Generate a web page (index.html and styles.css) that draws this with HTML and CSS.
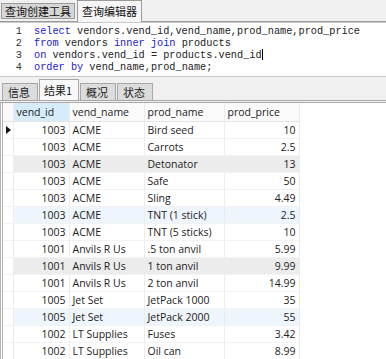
FILE: index.html
```html
<!DOCTYPE html>
<html lang="zh">
<head>
    <meta charset="UTF-8">
    <title>查询编辑器</title>
    <link rel="stylesheet" href="styles.css">
</head>
<body>
    <div class="window">
        <div class="top-tabs">
            <div class="tab">查询创建工具</div>
            <div class="tab active">查询编辑器</div>
        </div>

        <div class="editor">
            <div class="code-line"><span class="ln">1</span><span class="kw">select</span> vendors.vend_id,vend_name,prod_name,prod_price</div>
            <div class="code-line"><span class="ln">2</span><span class="kw">from</span> vendors <span class="kw">inner join</span> products</div>
            <div class="code-line"><span class="ln">3</span><span class="kw">on</span> vendors.vend_id = products.vend_id<span class="caret"></span></div>
            <div class="code-line"><span class="ln">4</span><span class="kw">order by</span> vend_name,prod_name;</div>
        </div>

        <div class="result-tabs">
            <div class="rtab">信息</div>
            <div class="rtab active">结果1</div>
            <div class="rtab">概况</div>
            <div class="rtab">状态</div>
        </div>

        <div class="grid-wrap">
            <table class="grid">
                <thead>
                    <tr>
                        <th class="ind"></th>
                        <th class="c-id sel">vend_id</th>
                        <th class="c-name">vend_name</th>
                        <th class="c-prod">prod_name</th>
                        <th class="c-price">prod_price</th>
                    </tr>
                </thead>
                <tbody>
                    <tr><td class="ind"><span class="arrow"></span></td><td class="num">1003</td><td>ACME</td><td>Bird seed</td><td class="num">10</td></tr>
                    <tr><td class="ind"></td><td class="num">1003</td><td>ACME</td><td>Carrots</td><td class="num">2.5</td></tr>
                    <tr class="gray"><td class="ind"></td><td class="num">1003</td><td>ACME</td><td>Detonator</td><td class="num">13</td></tr>
                    <tr><td class="ind"></td><td class="num">1003</td><td>ACME</td><td>Safe</td><td class="num">50</td></tr>
                    <tr><td class="ind"></td><td class="num">1003</td><td>ACME</td><td>Sling</td><td class="num">4.49</td></tr>
                    <tr class="blue"><td class="ind"></td><td class="num">1003</td><td>ACME</td><td>TNT (1 stick)</td><td class="num">2.5</td></tr>
                    <tr><td class="ind"></td><td class="num">1003</td><td>ACME</td><td>TNT (5 sticks)</td><td class="num">10</td></tr>
                    <tr><td class="ind"></td><td class="num">1001</td><td>Anvils R Us</td><td>.5 ton anvil</td><td class="num">5.99</td></tr>
                    <tr class="gray"><td class="ind"></td><td class="num">1001</td><td>Anvils R Us</td><td>1 ton anvil</td><td class="num">9.99</td></tr>
                    <tr><td class="ind"></td><td class="num">1001</td><td>Anvils R Us</td><td>2 ton anvil</td><td class="num">14.99</td></tr>
                    <tr><td class="ind"></td><td class="num">1005</td><td>Jet Set</td><td>JetPack 1000</td><td class="num">35</td></tr>
                    <tr class="blue"><td class="ind"></td><td class="num">1005</td><td>Jet Set</td><td>JetPack 2000</td><td class="num">55</td></tr>
                    <tr><td class="ind"></td><td class="num">1002</td><td>LT Supplies</td><td>Fuses</td><td class="num">3.42</td></tr>
                    <tr><td class="ind"></td><td class="num">1002</td><td>LT Supplies</td><td>Oil can</td><td class="num">8.99</td></tr>
                </tbody>
            </table>
        </div>
    </div>
</body>
</html>
```

FILE: styles.css
```css
body {
    margin: 0;
    padding: 0;
    background: #ffffff;
    font-family: "Open Sans", "Noto Sans CJK SC", sans-serif;
    color: #1a1a1a;
}

.window {
    width: 386px;
    height: 359px;
    overflow: hidden;
    background: #f0f0f0;
}

/* Top tabs */
.top-tabs {
    display: flex;
    align-items: flex-end;
    height: 22px;
    padding-left: 1px;
    gap: 2px;
    border-bottom: 1px solid #9c9c9c;
    box-sizing: border-box;
}

.tab {
    font-family: "Noto Sans CJK SC", sans-serif;
    font-size: 11px;
    height: 16px;
    line-height: 15px;
    margin-bottom: 2px;
    padding: 0 3px;
    background: #d6d6d6;
    border: 1px solid #9a9a9a;
    box-sizing: border-box;
    color: #111;
}

.tab.active {
    height: 22px;
    line-height: 20px;
    margin-bottom: -1px;
    padding: 0 4px;
    background: #f5f5f5;
    border-bottom: none;
}

/* SQL editor */
.editor {
    height: 55px;
    background: #ffffff;
    border-top: 1px solid #c8c8c8;
    border-bottom: 1px solid #c8c8c8;
    padding-top: 2px;
    box-sizing: border-box;
    font-family: "Liberation Mono", monospace;
    font-size: 10.25px;
    color: #222;
}

.code-line {
    height: 12px;
    line-height: 12px;
    white-space: pre;
}

.ln {
    display: inline-block;
    width: 22px;
    padding-right: 12px;
    text-align: right;
    color: #333;
}

.kw {
    color: #2020d0;
}

.caret {
    display: inline-block;
    width: 1px;
    height: 11px;
    vertical-align: -2px;
    background: #000;
}

/* Result tabs */
.result-tabs {
    display: flex;
    align-items: flex-end;
    height: 23px;
    padding-left: 2px;
    gap: 1px;
    border-bottom: 3px double #a8a8a8;
}

.rtab {
    font-family: "Noto Sans CJK SC", sans-serif;
    font-size: 11px;
    width: 36px;
    height: 17px;
    line-height: 16px;
    padding-left: 5px;
    background: #dcdcdc;
    border: 1px solid #a8a8a8;
    border-bottom: none;
    box-sizing: border-box;
    color: #222;
}

.rtab.active {
    width: 40px;
    height: 21px;
    line-height: 20px;
    padding-left: 4px;
    background: #f8f8f8;
    white-space: nowrap;
}

/* Result grid */
.grid-wrap {
    height: 260px;
    background: #ffffff;
    border-left: 3px double #b4b4b4;
}

.grid {
    border-collapse: collapse;
    font-size: 10.5px;
    color: #222;
}

.grid th,
.grid td {
    height: 17px;
    padding: 0 3px;
    box-sizing: border-box;
    border-right: 1px solid #ececec;
    border-bottom: 1px solid #f2f2f2;
    white-space: nowrap;
    text-align: left;
    font-weight: normal;
}

.grid th {
    height: 18px;
    background: #fafafa;
    border-bottom: 1px solid #e4e4e4;
}

.grid th.sel {
    background: #d6ecf8;
}

.grid .ind {
    width: 10px;
    padding: 0;
    position: relative;
}

.c-id { width: 56px; }
.c-name { width: 75px; }
.c-prod { width: 80px; }
.c-price { width: 75px; }

.grid td.num {
    text-align: right;
}

.grid tr.gray td {
    background: #ececec;
}

.grid tr.blue td {
    background: #eef5fc;
}

.grid tr td.ind {
    background: #ffffff;
}

.arrow {
    position: absolute;
    left: 3px;
    top: 4px;
    width: 0;
    height: 0;
    border-top: 4px solid transparent;
    border-bottom: 4px solid transparent;
    border-left: 5px solid #111;
}
```
